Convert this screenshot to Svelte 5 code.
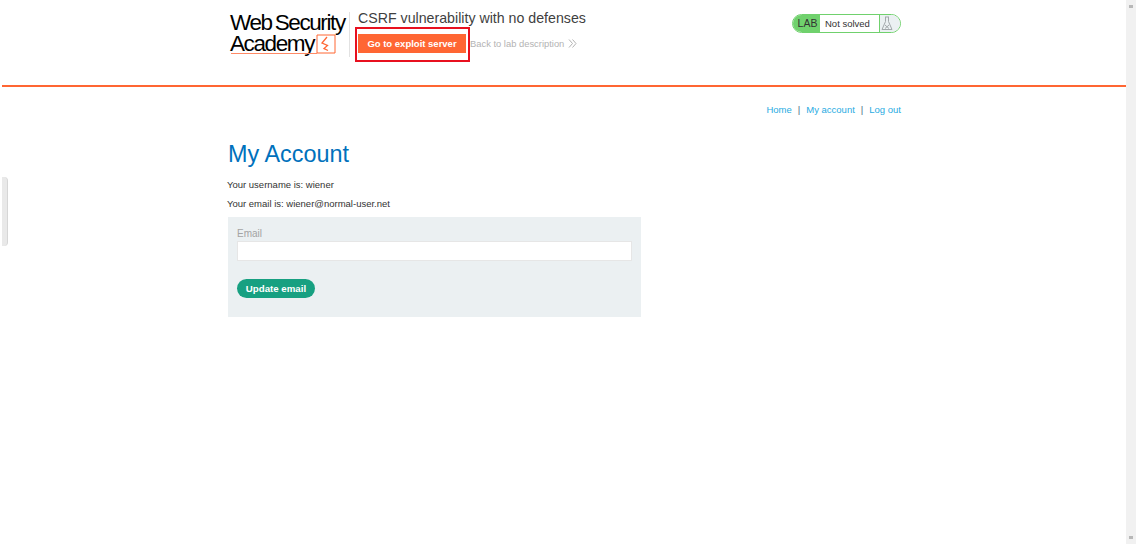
<script>
  const navLinks = ['Home', 'My account', 'Log out']
</script>

<div class="page">
  <div class="main">
    <div class="side-tab"></div>

    <header class="lab-header">
      <div class="container header-row">
        <div class="logo">
          <div class="logo-line">Web<span class="logo-gap">Security</span></div>
          <div class="logo-line academy">
            Academy
            <svg class="logo-mark" width="20" height="20" viewBox="0 0 20 20" fill="none">
              <path d="M19 1H1V19H19Z" stroke="#ff6633" stroke-width="1" />
              <path d="M11 3L6 9L11.500 11.500L8 14.500L12 16.500" stroke="#ff6633" stroke-width="1.300" />
              <path d="M-85 19.500H1" stroke="#ff8a66" stroke-width="1" />
            </svg>
          </div>
        </div>

        <div class="title-block">
          <h2 class="lab-title">CSRF vulnerability with no defenses</h2>
          <div class="title-actions">
            <span class="exploit-wrap">
              <a class="exploit-btn" href="#exploit">Go to exploit server</a>
              <span class="highlight"></span>
            </span>
            <a class="back-link" href="#back">
              Back to lab description
              <svg width="9" height="9" viewBox="0 0 9 9" fill="none" stroke="#b3b3b3" stroke-width="1">
                <path d="M1 .5L4.500 4.500L1 8.500M4.500 .5L8 4.500L4.500 8.500" />
              </svg>
            </a>
          </div>
        </div>

        <div class="lab-status">
          <span class="lab-tag">LAB</span>
          <span class="lab-state">Not solved</span>
          <span class="lab-icon">
            <svg width="12" height="15" viewBox="0 0 12 15" fill="none" stroke="#a3a8ab" stroke-width="1">
              <path d="M4 1H8M4.500 1V5.500L1 13.500H11L7.500 5.500V1" />
              <path d="M4 9L8 12.500M8 9L4 12.500" />
            </svg>
          </span>
        </div>
      </div>
    </header>

    <div class="container">
      <nav class="top-links">
        {#each navLinks as link, i}
          {#if i > 0}<span class="sep">|</span>{/if}
          <a href="#nav">{link}</a>
        {/each}
      </nav>

      <h1 class="page-title">My Account</h1>
      <p class="info">Your username is: wiener</p>
      <p class="info">Your email is: wiener@normal-user.net</p>

      <form class="email-form" onsubmit={(e) => e.preventDefault()}>
        <label for="email">Email</label>
        <input id="email" type="email" />
        <button type="submit">Update email</button>
      </form>
    </div>
  </div>

  <div class="scrollbar">
    <span class="scroll-arrow"></span>
    <span class="scroll-arrow"></span>
  </div>
</div>

<style>
  :global(body) {
    background: #fff;
    font-family: "Liberation Sans", Arial, sans-serif;
  }

  .page {
    display: flex;
    height: 544px;
    overflow: hidden;
    padding-right: 4px;
  }

  .main {
    position: relative;
    flex: 1;
    padding-left: 2px;
  }

  .side-tab {
    position: absolute;
    left: 2px;
    top: 177px;
    width: 6px;
    height: 69px;
    box-sizing: border-box;
    background: #e9e9e9;
    border-right: 1px solid #d6d6d6;
    border-radius: 0 4px 4px 0;
  }

  .scrollbar {
    width: 10px;
    background: #f1f1f1;
    display: flex;
    flex-direction: column;
    justify-content: space-between;
    align-items: center;
    padding: 5px 0;
    box-sizing: border-box;
  }

  .scroll-arrow {
    width: 4px;
    height: 3px;
    background: #b8b8b8;
  }

  .container {
    width: 673px;
    margin-left: 226px;
  }

  .lab-header {
    height: 85px;
    border-bottom: 2px solid #ff6633;
  }

  .header-row {
    display: flex;
    align-items: flex-start;
  }

  .logo {
    width: 122px;
    height: 45px;
    margin-top: 12px;
    padding-left: 2px;
    box-sizing: border-box;
    border-right: 1px solid #e2e2e2;
    color: #000;
    font-size: 22.500px;
    line-height: 21px;
    letter-spacing: -1.4px;
  }

  .logo-line {
    white-space: nowrap;
  }

  .logo-gap {
    margin-left: 3px;
  }

  .academy {
    display: flex;
    align-items: center;
  }

  .logo-mark {
    margin-left: 2px;
    overflow: visible;
  }

  .title-block {
    margin-left: 8px;
    padding-top: 10px;
    flex: 1;
  }

  .lab-title {
    margin: 0;
    font-size: 14.200px;
    font-weight: 400;
    line-height: 16px;
    color: #3f3f3f;
  }

  .title-actions {
    display: flex;
    align-items: center;
    margin-top: 8px;
  }

  .exploit-wrap {
    position: relative;
    display: block;
  }

  .exploit-btn {
    display: block;
    width: 108px;
    height: 19px;
    line-height: 19px;
    text-align: center;
    background: #ff6633;
    color: #fff;
    font-size: 9.500px;
    font-weight: 700;
    text-decoration: none;
  }

  .highlight {
    position: absolute;
    left: -3px;
    top: -7px;
    width: 115px;
    height: 35px;
    box-sizing: border-box;
    border: 2px solid #e8101f;
  }

  .back-link {
    display: flex;
    align-items: center;
    gap: 4px;
    margin-left: 4px;
    color: #b3b3b3;
    font-size: 9.400px;
    text-decoration: none;
  }

  .lab-status {
    display: flex;
    height: 19px;
    margin-top: 14px;
    box-sizing: border-box;
    border: 1px solid #70d16d;
    border-radius: 10px;
    overflow: hidden;
    font-size: 9.500px;
    line-height: 17px;
    color: #333;
  }

  .lab-tag {
    width: 27px;
    padding-left: 2px;
    box-sizing: border-box;
    background: #70d16d;
    text-align: center;
    font-size: 10.500px;
  }

  .lab-state {
    width: 60px;
    padding-left: 5px;
    box-sizing: border-box;
    border-right: 1px solid #70d16d;
  }

  .lab-icon {
    width: 20px;
    background: #ebf0f2;
    display: flex;
    align-items: center;
    padding-left: 1px;
    box-sizing: border-box;
  }

  .top-links {
    display: flex;
    justify-content: flex-end;
    gap: 6px;
    height: 14px;
    margin-top: 16px;
    font-size: 9.500px;
    line-height: 14px;
  }

  .top-links a {
    color: #29abe2;
    text-decoration: none;
  }

  .sep {
    color: #4b6b85;
  }

  .page-title {
    margin: 22px 0 0;
    font-size: 23.400px;
    font-weight: 400;
    line-height: 30px;
    color: #0071bc;
  }

  .info {
    margin: 0 0 0 -1px;
    font-size: 9.500px;
    line-height: 12px;
    color: #333332;
    padding-top: 7px;
  }

  .info:first-of-type {
    padding-top: 10px;
  }

  .email-form {
    display: flex;
    flex-direction: column;
    align-items: flex-start;
    width: 413px;
    height: 100px;
    margin-top: 7px;
    padding: 10px 9px 0;
    box-sizing: border-box;
    background: #ebf0f2;
  }

  .email-form label {
    font-size: 10px;
    line-height: 13px;
    color: #a3a3a3;
  }

  .email-form input {
    width: 395px;
    height: 20px;
    margin: 1px 0 0;
    padding: 0;
    box-sizing: border-box;
    background: #fff;
    border: 1px solid #e6e6e6;
    outline: none;
  }

  .email-form button {
    width: 78px;
    height: 19px;
    margin-top: 18px;
    padding: 0;
    border: 0;
    border-radius: 10px;
    background: #17a081;
    color: #fff;
    font-family: inherit;
    font-size: 9.700px;
    font-weight: 700;
  }
</style>
